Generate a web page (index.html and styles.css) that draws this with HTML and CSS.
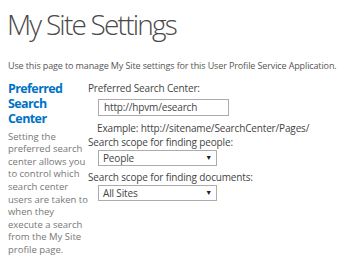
FILE: index.html
```html
<!DOCTYPE html>
<html lang="en">
<head>
  <meta charset="UTF-8" />
  <title>My Site Settings</title>
  <link rel="stylesheet" href="styles.css">
</head>
<body>
  <div class="page">
    <h1 class="page-title">My Site Settings</h1>
    <p class="page-desc">Use this page to manage My Site settings for this User Profile Service Application.</p>
    <div class="section">
      <div class="section-info">
        <h2 class="section-title">Preferred Search Center</h2>
        <p class="section-desc">Setting the preferred search center allows you to control which search center users are taken to when they execute a search from the My Site profile page.</p>
      </div>
      <div class="section-fields">
        <label class="field-label">Preferred Search Center:</label>
        <div class="field-input">http://hpvm/esearch</div>
        <div class="field-hint">Example: http://sitename/SearchCenter/Pages/</div>
        <label class="field-label">Search scope for finding people:</label>
        <div class="field-select"><span>People</span><span class="arrow">▼</span></div>
        <label class="field-label">Search scope for finding documents:</label>
        <div class="field-select"><span>All Sites</span><span class="arrow">▼</span></div>
      </div>
    </div>
  </div>
</body>
</html>
```
FILE: styles.css
```css
* { box-sizing: border-box; margin: 0; padding: 0; }
body {
  background: #fff;
  font-family: 'Open Sans', sans-serif;
  color: #444;
}
.page {
  padding: 6px 8px 0;
}
.page-title {
  font-weight: 300;
  font-size: 28px;
  line-height: 36px;
  letter-spacing: -1.8px;
  color: #4a4a4a;
  margin-left: -1px;
}
.page-desc {
  margin-top: 17px;
  font-size: 9px;
  line-height: 14px;
  letter-spacing: -0.12px;
  color: #555;
  white-space: nowrap;
}
.section {
  display: flex;
  margin-top: 8px;
}
.section-info {
  width: 80px;
  flex: none;
}
.section-title {
  width: 70px;
  font-size: 12.5px;
  font-weight: 700;
  line-height: 15.2px;
  letter-spacing: -0.6px;
  color: #0072c6;
}
.section-desc {
  margin-top: 4px;
  font-size: 9.5px;
  line-height: 12.6px;
  color: #777;
}
.section-fields {
  display: flex;
  flex-direction: column;
  align-items: flex-start;
  font-size: 10px;
  line-height: 14px;
  letter-spacing: -0.15px;
}
.field-label {
  display: block;
}
.field-input {
  margin: 4px 0 1px 10px;
  width: 131px;
  height: 17px;
  border: 1px solid #ababab;
  padding: 0 5px;
  line-height: 15px;
}
.field-hint {
  margin: 4px 0 0 9px;
}
.field-select {
  margin: 1px 0 4px 10px;
  width: 119px;
  height: 16px;
  border: 1px solid #ababab;
  padding: 0 4px 0 4px;
  line-height: 14px;
  display: flex;
  justify-content: space-between;
}
.arrow {
  font-size: 7px;
  color: #222;
}
```
